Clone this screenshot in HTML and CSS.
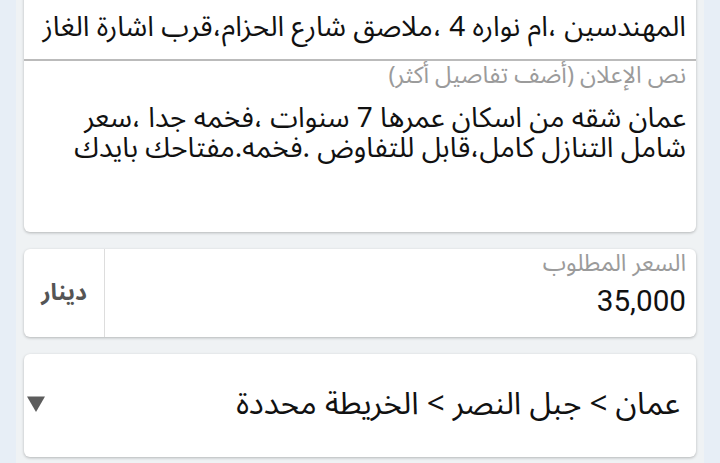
FILE: index.html
```html
<!DOCTYPE html>
<html lang="ar" dir="rtl">
<head>
<meta charset="utf-8">
<link rel="stylesheet" href="styles.css">
</head>
<body>
<div class="column">
  <div class="card card-text">
    <div class="addr">المهندسين ،ام نواره 4 ،ملاصق شارع الحزام،قرب اشارة الغاز</div>
    <div class="desc">
      <div class="label">نص الإعلان (أضف تفاصيل أكثر)</div>
      <div class="body">عمان شقه من اسكان عمرها 7 سنوات ،فخمه جدا ،سعر<br>شامل التنازل كامل،قابل للتفاوض .فخمه.مفتاحك بايدك</div>
    </div>
  </div>
  <div class="card card-price">
    <div class="price-main">
      <div class="label">السعر المطلوب</div>
      <div class="price">35,000</div>
    </div>
    <div class="currency">دينار</div>
  </div>
  <div class="card card-loc">
    <div class="loc">عمان &gt; جبل النصر &gt; الخريطة محددة</div>
    <svg class="arrow" width="20" height="18" viewBox="0 0 20 18"><path d="M1 1.5 L19 1.5 L10 17 Z" fill="#5c5c5c"/></svg>
  </div>
</div>
</body>
</html>
```
FILE: styles.css
```css
html, body {
  margin: 0;
  padding: 0;
  background: #e7eef6;
  height: 463px;
  overflow: hidden;
}
body {
  font-family: "Noto Sans Arabic", "DejaVu Sans", sans-serif;
  color: #111;
}
.column {
  margin: -12px 16px 0 16px;
  background: #eff2f4;
  padding: 0 8px;
  height: 500px;
  display: flex;
  flex-direction: column;
  gap: 17px;
}
.card {
  background: #fff;
  border-radius: 6px;
  box-shadow: 0 1px 3px rgba(0,0,0,0.25);
}
.card-text {
  height: 244px;
  display: flex;
  flex-direction: column;
}
.addr {
  height: 73px;
  box-sizing: border-box;
  padding: 22px 10px 0 10px;
  font-size: 28px;
  line-height: 36px;
  border-bottom: 2px solid #bbb;
  white-space: nowrap;
}
.desc {
  padding: 0 10px 0 10px;
}
.label {
  font-size: 23.6px;
  color: #9b9b9b;
  line-height: 30px;
}
.body {
  margin-top: 13px;
  font-size: 28px;
  line-height: 30px;
  white-space: nowrap;
}
.card-price {
  height: 88px;
  display: flex;
}
.price-main {
  flex: 1;
  padding: 0 10px 0 10px;
  border-left: 1px solid #ddd;
}
.price {
  font-family: Roboto, sans-serif;
  font-size: 29.7px;
  line-height: 34px;
  margin-top: 5px;
  direction: ltr;
  text-align: right;
}
.currency {
  width: 80px;
  display: flex;
  align-items: center;
  justify-content: center;
  font-weight: bold;
  font-size: 23px;
  color: #555;
  padding-bottom: 2px;
}
.card-loc {
  height: 103px;
  display: flex;
  align-items: center;
  justify-content: space-between;
  padding: 0 16px 0 2px;
}
.loc {
  font-size: 31.3px;
  line-height: 36px;
  margin-top: -4px;
}
.arrow {
  display: block;
  margin-top: -4px;
}
```
